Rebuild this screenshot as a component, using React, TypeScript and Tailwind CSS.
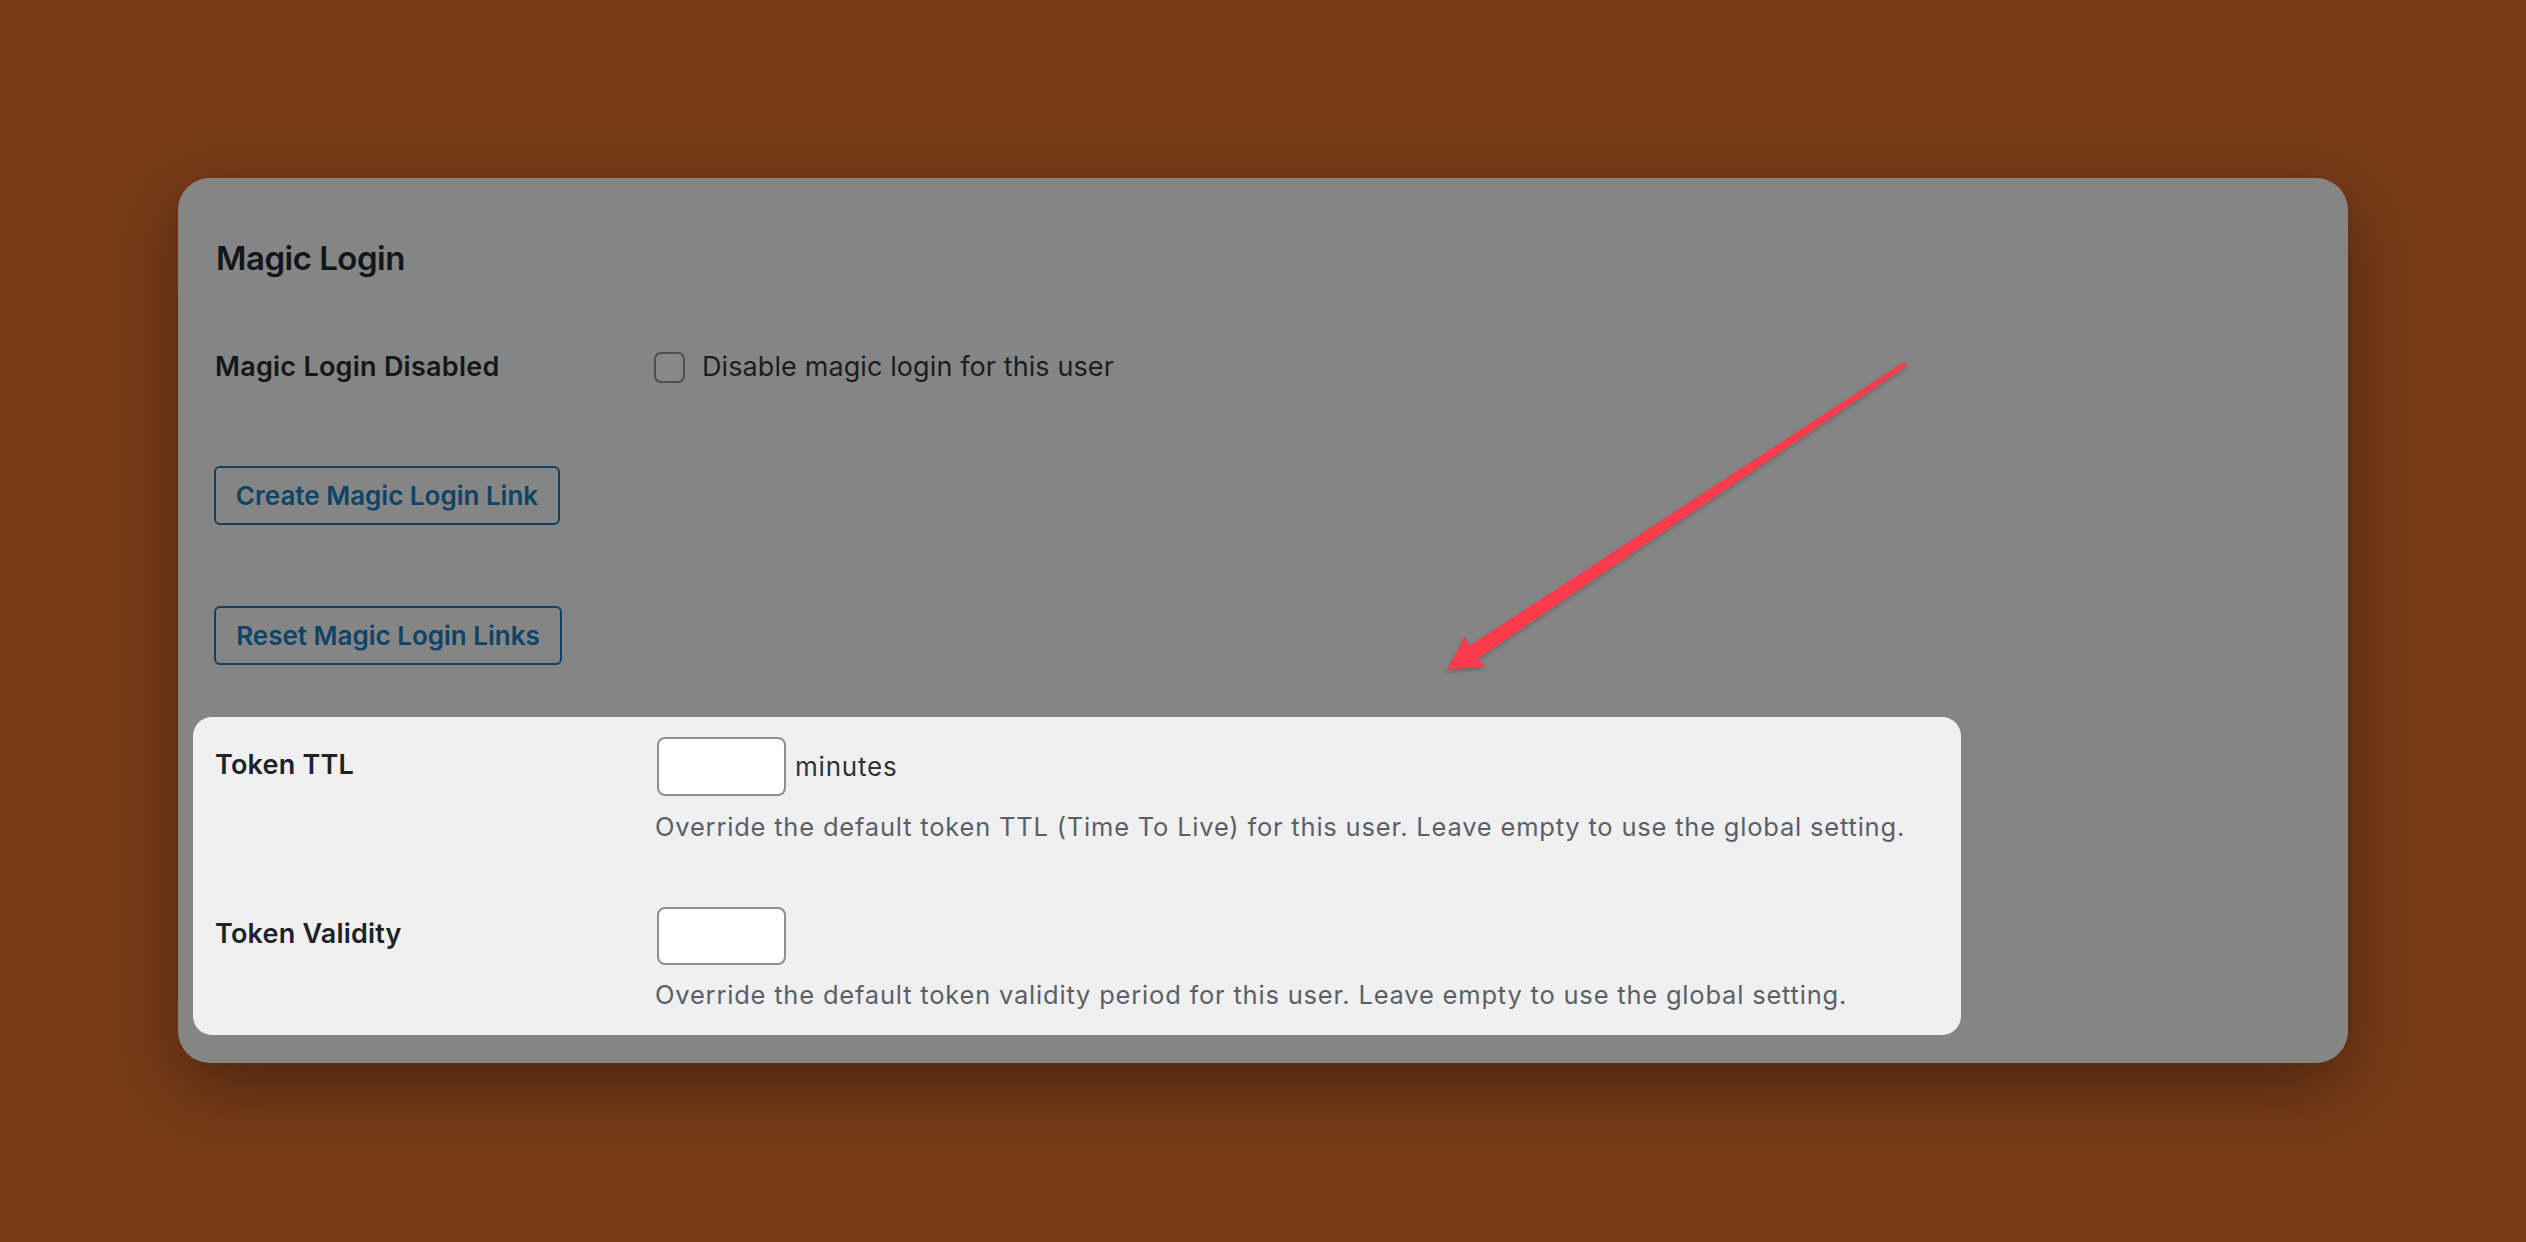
import React from "react";

const font = { fontFamily: "Inter, 'Noto Sans', sans-serif" };

function Arrow() {
  return (
    <svg
      className="absolute left-0 top-0 pointer-events-none"
      width={2526}
      height={1242}
      viewBox="0 0 2526 1242"
    >
      <defs>
        <filter id="sh" x="-10%" y="-10%" width="120%" height="120%">
          <feDropShadow dx="0" dy="2" stdDeviation="2" floodColor="#000" floodOpacity="0.25" />
        </filter>
      </defs>
      <g filter="url(#sh)" fill="#fe3a4c">
        <polygon points="1905.2,367 1474.5,660.8 1466.1,648.2 1902.6,363" />
        <circle cx="1904" cy="365" r="2.2" />
        <polygon points="1447,670 1485.5,666.4 1472,653.4 1465,636" />
      </g>
    </svg>
  );
}

export default function App() {
  return (
    <div
      className="relative w-[2526px] h-[1242px] overflow-hidden bg-[#763c18] pt-[178px] pl-[178px]"
      style={font}
    >
      <div className="w-[2170px] h-[885px] rounded-[32px] bg-[#858585] shadow-[0_24px_70px_rgba(30,10,0,0.45)] pt-[60px]">
        <h2 className="pl-[38px] h-[40px] leading-[40px] text-[33px] font-semibold text-[#121519] tracking-[-0.5px]">
          Magic Login
        </h2>

        <div className="mt-[73px] flex items-center h-[32px] pl-[37px]">
          <div className="w-[439px] text-[27px] leading-[40px] font-semibold text-[#14171a] tracking-[0.25px]">
            Magic Login Disabled
          </div>
          <div className="flex items-center">
            <span className="w-[31px] h-[31px] rounded-[7px] border-[2.5px] border-[#4d4f52] bg-[#888888]" />
            <span className="ml-[17px] text-[27px] leading-[40px] text-[#1a1d20] tracking-[0.1px]">
              Disable magic login for this user
            </span>
          </div>
        </div>

        <div className="mt-[83px] pl-[36px]">
          <button className="h-[59px] w-[346px] rounded-[6px] border-2 border-[#0e4163] text-[26px] font-semibold text-[#0c4366] flex items-center justify-center">
            Create Magic Login Link
          </button>
        </div>

        <div className="mt-[81px] pl-[36px]">
          <button className="h-[59px] w-[348px] rounded-[6px] border-2 border-[#0e4163] text-[26px] font-semibold text-[#0c4366] flex items-center justify-center">
            Reset Magic Login Links
          </button>
        </div>

        <div className="mt-[52px] ml-[15px] w-[1768px] h-[318px] rounded-[19px] bg-[#f0f0f1] pl-[22px] pt-[20px]">
          <div className="flex">
            <div className="w-[440px] mt-[8px] text-[27px] leading-[40px] font-semibold text-[#1d2327] tracking-[0.2px]">
              Token TTL
            </div>
            <div className="flex flex-col">
              <div className="flex items-center">
                <div className="ml-[2px] w-[129px] h-[59px] rounded-[8px] border-2 border-[#8c8f94] bg-white" />
                <span className="ml-[9px] text-[26px] leading-[40px] text-[#2c3338] tracking-[0.8px]">minutes</span>
              </div>
              <p className="mt-[11px] text-[25.5px] leading-[40px] text-[#5b6067] tracking-[0.8px] whitespace-nowrap">
                Override the default token TTL (Time To Live) for this user. Leave empty to use the global setting.
              </p>
            </div>
          </div>

          <div className="flex mt-[60px]">
            <div className="w-[440px] mt-[7px] text-[27px] leading-[40px] font-semibold text-[#1d2327] tracking-[0.2px]">
              Token Validity
            </div>
            <div className="flex flex-col">
              <div className="ml-[2px] w-[129px] h-[58px] rounded-[8px] border-2 border-[#8c8f94] bg-white" />
              <p className="mt-[10px] text-[25.5px] leading-[40px] text-[#5b6067] tracking-[0.8px] whitespace-nowrap">
                Override the default token validity period for this user. Leave empty to use the global setting.
              </p>
            </div>
          </div>
        </div>
      </div>
      <Arrow />
    </div>
  );
}
